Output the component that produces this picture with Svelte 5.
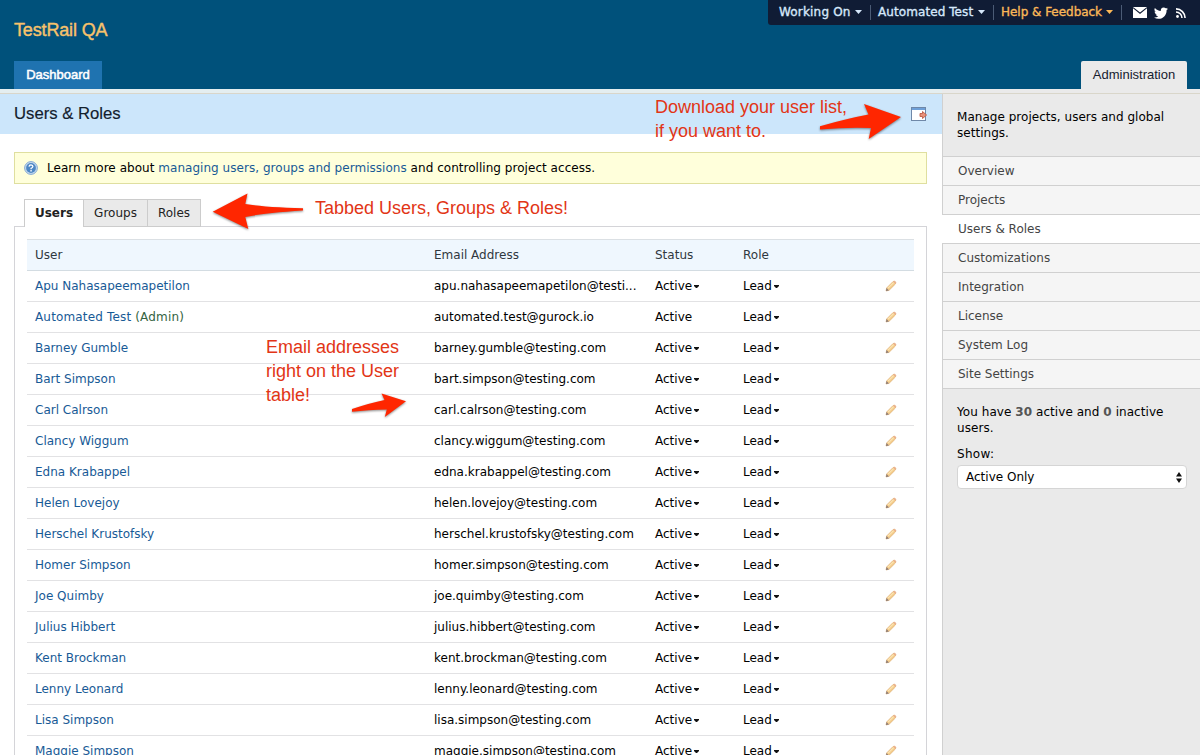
<script>
  const users = [
    ['Apu Nahasapeemapetilon', 'apu.nahasapeemapetilon@testi...'],
    ['Automated Test', 'automated.test@gurock.io', true],
    ['Barney Gumble', 'barney.gumble@testing.com'],
    ['Bart Simpson', 'bart.simpson@testing.com'],
    ['Carl Calrson', 'carl.calrson@testing.com'],
    ['Clancy Wiggum', 'clancy.wiggum@testing.com'],
    ['Edna Krabappel', 'edna.krabappel@testing.com'],
    ['Helen Lovejoy', 'helen.lovejoy@testing.com'],
    ['Herschel Krustofsky', 'herschel.krustofsky@testing.com'],
    ['Homer Simpson', 'homer.simpson@testing.com'],
    ['Joe Quimby', 'joe.quimby@testing.com'],
    ['Julius Hibbert', 'julius.hibbert@testing.com'],
    ['Kent Brockman', 'kent.brockman@testing.com'],
    ['Lenny Leonard', 'lenny.leonard@testing.com'],
    ['Lisa Simpson', 'lisa.simpson@testing.com'],
    ['Maggie Simpson', 'maggie.simpson@testing.com']
  ];
  const menu = ['Overview', 'Projects', 'Users & Roles', 'Customizations', 'Integration', 'License', 'System Log', 'Site Settings'];
</script>

{#snippet caret()}
  <svg class="caret" width="5" height="3" viewBox="0 0 5 3"><path d="M0 0H5V1L3 3H2L0 1Z" fill="#111" /></svg>
{/snippet}

{#snippet navCaret()}
  <svg class="nav-caret" width="7" height="4" viewBox="0 0 7 4"><path d="M0 0H7L3.5 4Z" fill="currentColor" /></svg>
{/snippet}

<div class="page">
  <header>
    <div class="brand">TestRail QA</div>
    <nav class="top">
      <span class="item working">Working On{@render navCaret()}</span>
      <span class="item account">Automated Test{@render navCaret()}</span>
      <span class="item help">Help &amp; Feedback{@render navCaret()}</span>
      <span class="social">
        <svg width="14" height="11" viewBox="0 0 14 11"><rect width="14" height="11" fill="#fff" /><path d="M0 .6L7 6.3L14 .6" fill="none" stroke="#101c35" stroke-width="1.2" /></svg>
        <svg width="14" height="12" viewBox="0 1.5 24 20.5"><path fill="#fff" d="M23.95 4.57a10 10 0 0 1-2.82.77 4.96 4.96 0 0 0 2.16-2.72c-.95.55-2 .95-3.13 1.18a4.92 4.92 0 0 0-8.38 4.48C7.69 8.1 4.07 6.13 1.64 3.16a4.92 4.92 0 0 0 1.52 6.57 4.9 4.9 0 0 1-2.23-.61v.06a4.92 4.92 0 0 0 3.95 4.83 5 5 0 0 1-2.21.08 4.94 4.94 0 0 0 4.6 3.42A9.87 9.87 0 0 1 0 19.54a14 14 0 0 0 7.55 2.21c9.05 0 14-7.5 14-13.98 0-.21 0-.42-.02-.63a9.94 9.94 0 0 0 2.46-2.55z" /></svg>
        <svg class="rss" width="10" height="10" viewBox="0 0 10 10"><circle cx="1.5" cy="8.5" r="1.4" fill="#fff" /><path d="M0 4A6 6 0 0 1 6 10M0 .9A9.1 9.1 0 0 1 9.1 10" fill="none" stroke="#fff" stroke-width="1.6" /></svg>
      </span>
    </nav>
    <div class="main-tabs">
      <span class="dash">Dashboard</span>
      <span class="admin">Administration</span>
    </div>
  </header>
  <div class="strip"></div>

  <div class="body">
    <main>
      <div class="title">
        <h1>Users &amp; Roles</h1>
        <svg width="17" height="15" viewBox="0 0 17 15">
          <rect x=".5" y=".5" width="14" height="13" fill="#fff" stroke="#6f88a8" />
          <rect x="1" y="1" width="13" height="2" fill="#6fa0d8" />
          <path d="M9 6.5H11.5V4.5L15.6 8L11.5 11.5V9.5H9Z" fill="#e8917a" stroke="#bd5a45" stroke-width=".9" />
        </svg>
      </div>
      <div class="hint">
        <svg width="14" height="14" viewBox="0 0 14 14">
          <circle cx="7" cy="7" r="6.4" fill="#c8dcf0" stroke="#7ba3d0" stroke-width=".9" />
          <circle cx="7" cy="7" r="4.9" fill="#4d87c4" />
          <path d="M5 5.6Q5.2 3.9 7 3.9Q8.9 4 8.9 5.5Q8.8 6.5 7.1 7.3V8.2" fill="none" stroke="#fff" stroke-width="1.3" />
          <rect x="6.3" y="9.1" width="1.5" height="1.4" fill="#fff" />
        </svg>
        <p>Learn more about <a>managing users, groups and permissions</a> and controlling project access.</p>
      </div>
      <div class="tabs">
        <span class="on">Users</span><span class="groups">Groups</span><span class="roles">Roles</span>
      </div>
      <section>
        <div class="row head"><span>User</span><span>Email Address</span><span>Status</span><span>Role</span><span></span></div>
        {#each users as [name, mail, admin]}
          <div class="row">
            <span class="name" class:admin-name={admin}>{name}{#if admin}&nbsp;<em>(Admin)</em>{/if}</span>
            <span>{mail}</span>
            <span>Active{#if !admin}{@render caret()}{/if}</span>
            <span>Lead{@render caret()}</span>
            <span class="edit">
              <svg width="12" height="12" viewBox="0 0 12 12">
                <path d="M1 11L1.8 7.8L8 1.6Q9.4 .7 10.4 1.7Q11.3 2.7 10.4 4L4.2 10.2Z" fill="#f5cd8b" stroke="#dcae74" stroke-width=".7" />
                <path d="M3 8.2L8.6 2.6" stroke="#fbe5b5" stroke-width="1.2" />
                <path d="M8.2 1.6Q9.5 .7 10.4 1.7Q11.3 2.7 10.4 3.8Z" fill="#eba98f" />
                <path d="M1 11L1.5 8.1L3.9 10.5Z" fill="#8a7a76" />
              </svg>
            </span>
          </div>
        {/each}
      </section>
    </main>

    <aside>
      <p class="intro">Manage projects, users and global settings.</p>
      <ul>
        {#each menu as m}
          <li class:current={m === 'Users & Roles'}>{m}</li>
        {/each}
      </ul>
      <div class="info">
        <p>You have <b>30</b> active and <b>0</b> inactive users.</p>
        <label for="show">Show:</label>
        <div class="select" id="show">Active Only
          <svg width="6" height="11" viewBox="0 0 6 11"><path d="M0 4.4L3 0L6 4.4ZM0 6.6L3 11L6 6.6Z" fill="#111" /></svg>
        </div>
      </div>
    </aside>
  </div>

  <div class="note n1">Download your user list,<br />if you want to.</div>
  <div class="note n2">Tabbed Users, Groups &amp; Roles!</div>
  <div class="note n3">Email addresses<br />right on the User<br />table!</div>
  <svg class="arrows" width="1200" height="755" viewBox="0 0 1200 755">
    <path d="M901 117L864 104L868.5 114.6Q850 118 820 126.2V129.6Q846 127 871 128L868.7 139Z" />
    <path d="M212.7 211.7L247.5 193.5L245.3 204Q265 207.5 303 208.2V210.6Q265 213 245.3 217L248.3 229Z" />
    <path d="M406 401.3L381.5 393.5L384.5 400Q370 403 352 409V411.8Q368 409.5 386.8 409.4L384.8 417Z" />
  </svg>
</div>

<style>
  :global(body) { margin: 0; overflow: hidden; }
  .page { position: relative; width: 1200px; height: 755px; overflow: hidden; background: #fff; font: 12px/16px Verdana, "DejaVu Sans", sans-serif; color: #000; display: flex; flex-direction: column; }
  p, h1, ul { margin: 0; padding: 0; font-weight: normal; }
  svg { flex: none; }
  header { height: 89px; flex: none; background: #00517b; display: grid; grid-template: 61px 28px / 768px 432px; }
  .brand { padding: 19px 0 0 14px; font: 18px/22px Helvetica, "Liberation Sans", sans-serif; letter-spacing: -.15px; color: #f7c26b; -webkit-text-stroke: .4px #f7c26b; }
  .top { height: 25px; background: #101c35; border-bottom-left-radius: 3px; display: flex; align-items: center; color: #d6e8fb; padding: 0 0 1px 11px; box-sizing: border-box; }
  .item { display: flex; align-items: center; justify-content: space-between; box-sizing: border-box; height: 15px; line-height: 14px; border-right: 1px solid #4b5b75; padding-right: 8px; margin-right: 7px; white-space: nowrap; -webkit-text-stroke: .35px currentColor; }
  .working { width: 92px; letter-spacing: .18px; }
  .account { width: 116px; letter-spacing: .08px; }
  .item.help { width: 121px; color: #fbb858; letter-spacing: -.03px; }
  .social { display: flex; align-items: center; gap: 7px; margin-left: 4px; padding-top: 1px; }
  .rss { margin-left: 1px; }
  .main-tabs { grid-column: 1 / 3; display: flex; justify-content: space-between; padding: 0 13px 0 14px; font: 13px/27px Helvetica, "Liberation Sans", sans-serif; }
  .dash { width: 88px; text-align: center; background: #1f73b0; color: #fff; -webkit-text-stroke: .5px #fff; }
  .admin { width: 106px; text-align: center; background: #eaeaea; color: #16202e; border-radius: 2px 2px 0 0; }
  .strip { height: 4px; flex: none; background: linear-gradient(90deg, #e4eef0 0 942px, #eaeaea 942px); border-bottom: 1px solid #d9d6ca; }
  .body { flex: 1; display: flex; min-height: 0; }
  main { width: 942px; }
  .title { height: 40px; background: #cce6fb; display: flex; justify-content: space-between; align-items: center; padding: 0 14px; }
  h1 { font: 16.7px/22px Helvetica, "Liberation Sans", sans-serif; color: #13202d; -webkit-text-stroke: .15px #13202d; }
  .hint { margin: 18px 0 0 14px; width: 902px; height: 30px; border: 1px solid #dfdf9f; background: #ffffdb; display: flex; align-items: center; gap: 9px; padding-left: 9px; letter-spacing: .035px; }
  a, .name { color: #185a96; }
  .tabs { display: flex; margin: 15px 0 -1px 24px; position: relative; height: 28px; }
  .tabs span { box-sizing: border-box; border: 1px solid #ccc; border-left: 0; background: #eaeaea; line-height: 26px; text-align: center; color: #222; }
  .tabs .on { width: 60px; border-left: 1px solid #ccc; background: #fff; border-bottom: 0; font-weight: bold; }
  .tabs .groups { width: 64px; }
  .tabs .roles { width: 53px; }
  section { margin-left: 14px; width: 887px; height: 600px; padding: 12px 12px 0; border: 1px solid #d4d4d8; }
  .row { height: 30px; border-bottom: 1px solid #e2e2e4; display: grid; grid-template-columns: 399px 221px 88px 136px 1fr; align-items: center; padding-left: 8px; white-space: nowrap; }
  .row.head { background: #eff7fe; border-top: 1px solid #dbe0e4; border-bottom-color: #d3dce2; color: #30383f; }
  em { font-style: normal; color: #34633f; }
  .admin-name { letter-spacing: .16px; }
  .caret { margin-left: 2px; vertical-align: 2px; }
  .edit { display: flex; padding-left: 6px; }
  aside { width: 257px; background: #eaeaea; border-left: 1px solid #d0d0d0; }
  .intro { padding: 15px 20px 15px 14px; letter-spacing: .03px; }
  ul { list-style: none; border-bottom: 1px solid #d0d0d0; }
  li { height: 28px; line-height: 28px; border-top: 1px solid #d0d0d0; background: #f5f5f5; padding-left: 15px; color: #444; }
  li.current { background: #fff; margin-left: -1px; padding-left: 16px; }
  .info { padding: 15px 13px 0 14px; }
  .info p { width: 215px; margin-bottom: 10px; letter-spacing: .06px; }
  b { color: #555; }
  label { display: block; margin-bottom: 3px; letter-spacing: .3px; }
  .select { height: 22px; line-height: 22px; background: #fff; border: 1px solid #d5d5d5; border-radius: 4px; display: flex; align-items: center; justify-content: space-between; padding: 0 4px 0 8px; }
  .note { position: absolute; font: 18px/24px Helvetica, "Liberation Sans", sans-serif; color: #e23516; white-space: nowrap; }
  .n1 { left: 655px; top: 95px; }
  .n2 { left: 315px; top: 196px; }
  .n3 { left: 266px; top: 335px; }
  .arrows { position: absolute; left: 0; top: 0; pointer-events: none; fill: #ff2600; filter: drop-shadow(0 1.5px 1.2px rgba(0, 0, 0, .45)); }
</style>
